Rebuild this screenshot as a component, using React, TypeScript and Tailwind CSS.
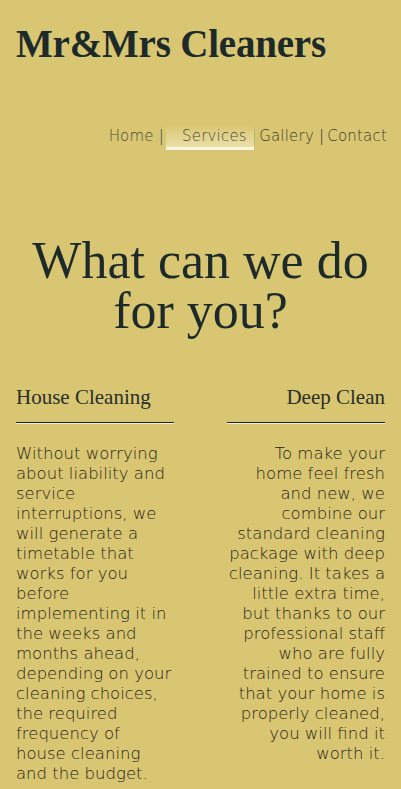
import React from 'react';

const serif = "font-['Liberation_Serif','DejaVu_Serif',serif]";
const sans = "font-['DejaVu_Sans','Noto_Sans',sans-serif]";

const services = [
  {
    title: 'House Cleaning',
    align: 'text-left',
    text: 'Without worrying about liability and service interruptions, we will generate a timetable that works for you before implementing it in the weeks and months ahead, depending on your cleaning choices, the required frequency of house cleaning and the budget.',
  },
  {
    title: 'Deep Clean',
    align: 'text-right',
    text: 'To make your home feel fresh and new, we combine our standard cleaning package with deep cleaning. It takes a little extra time, but thanks to our professional staff who are fully trained to ensure that your home is properly cleaned, you will find it worth it.',
  },
];

const App: React.FC = () => {
  return (
    <div className="min-h-[789px] bg-[#d8c673] text-[#1d2a2a] px-4 overflow-hidden">
      <header className="pt-[22px]">
        <h1 className={`${serif} font-bold text-[39px] leading-[44px] tracking-[-0.2px]`}>Mr&amp;Mrs Cleaners</h1>
        <nav className={`${sans} font-extralight mt-[58px] flex justify-end items-center text-[15px] tracking-[0.2px] text-[#4d4838]`}>
          <a>Home</a>
          <span className="text-[#1d4a4a] ml-[5px]">|</span>
          <a className="ml-[2px] pl-[16px] pr-[7px] h-[25px] flex items-center bg-gradient-to-b from-[#d8c673] to-[#ebe0a6] border-b-[3px] border-[#fbf6e4] translate-y-[1px]">
            Services
          </a>
          <span className="text-[#1d4a4a] -ml-[3px] mr-[3px]">|</span>
          <a className="text-[#3f3a2a]">Gallery</a>
          <span className="text-[#2a2a2a] ml-[5px] mr-[3px]">|</span>
          <a className="text-[#3f3a2a] -mr-[2px]">Contact</a>
        </nav>
      </header>

      <main>
        <h2 className={`${serif} mt-[87px] text-center text-[52px] leading-[50px]`}>
          What can we do for you?
        </h2>

        <div className="mt-[49px] grid grid-cols-2 gap-[53px]">
          {services.map((s) => (
            <section key={s.title} className={s.align}>
              <h3 className={`${serif} text-[21px] leading-[24px] text-[#2a2f28]`}>{s.title}</h3>
              <div className="mt-[13px] border-b border-[#1d2020] shadow-[0_1px_0_#f5efd0]" />
              <p className={`${sans} font-extralight mt-[21px] text-[16.5px] leading-[20px] text-[#2b2216]`}>{s.text}</p>
            </section>
          ))}
        </div>
      </main>
    </div>
  );
};

export default App;
